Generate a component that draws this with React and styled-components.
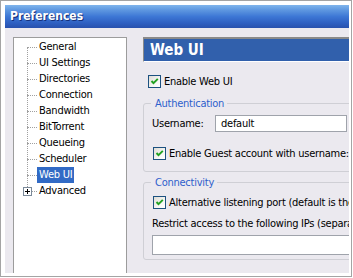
import React from "react"
import styled, { createGlobalStyle } from "styled-components"

const UI_FONT = `"DejaVu Sans Condensed", "Liberation Sans", sans-serif`
const FACE = "#ebe9ef"

const GlobalStyle = createGlobalStyle`
  html, body {
    margin: 0;
    background: #fff;
  }
  body {
    font-family: ${UI_FONT};
    font-size: 11px;
    letter-spacing: -0.25px;
    color: #000;
  }
`

const Frame = styled.div`
  box-sizing: border-box;
  width: 352px;
  height: 277px;
  border: 1px solid #a4a4a4;
  padding: 4px 2px 3px 4px;
  background: #fff;
  overflow: hidden;
`
const Window = styled.div`
  display: flex;
  flex-direction: column;
  height: 100%;
  overflow: hidden;
`
const TitleBar = styled.div`
  flex-shrink: 0;
  height: 23px;
  display: flex;
  align-items: center;
  padding: 0 0 1px 5px;
  box-sizing: border-box;
  background: linear-gradient(
    180deg,
    #80b5ec 0%,
    #5e97e0 22%,
    #3d77d5 50%,
    #2e60c2 78%,
    #2851ad 100%
  );
  color: #fff;
  font-weight: bold;
  font-size: 12px;
  letter-spacing: 0;
  text-shadow: 1px 1px 0 #14307a;
`
const Body = styled.div`
  flex: 1;
  min-height: 0;
  display: flex;
  gap: 16px;
  padding: 9px 0 0 8px;
  background: ${FACE};
  overflow: hidden;
`

/* tree */
const Tree = styled.div`
  flex-shrink: 0;
  width: 114px;
  box-sizing: border-box;
  border: 1px solid #9c9c9c;
  border-bottom: none;
  background: #fff;
  padding-top: 1px;
`
const TreeList = styled.div`
  position: relative;
  &::before {
    content: "";
    position: absolute;
    left: 13px;
    top: 8px;
    bottom: 8px;
    border-left: 1px dotted #a0a0a0;
  }
`
const TreeRow = styled.div`
  display: flex;
  align-items: center;
  height: 16px;
`
const Branch = styled.span`
  position: relative;
  flex-shrink: 0;
  width: 23px;
  height: 16px;
  &::after {
    content: "";
    position: absolute;
    left: 13px;
    top: 8px;
    width: 10px;
    border-top: 1px dotted #a0a0a0;
  }
`
const Expander = styled.svg`
  position: absolute;
  left: 9px;
  top: 4px;
  z-index: 1;
`
const TreeLabel = styled.span`
  line-height: 16px;
  padding: 0 2px;
  white-space: nowrap;
  background: ${({ $selected }) => ($selected ? "#316ac5" : "transparent")};
  color: ${({ $selected }) => ($selected ? "#fff" : "#000")};
`

/* right side */
const Panel = styled.div`
  flex-shrink: 0;
  width: 260px;
  display: flex;
  flex-direction: column;
`
const PanelHeader = styled.div`
  height: 22px;
  display: flex;
  align-items: center;
  padding-left: 6px;
  border-top: 2px solid #8a8a8a;
  border-left: 1px solid #8a8a8a;
  border-bottom: 1px solid #fff;
  background: #3160ac;
  color: #fff;
  font-weight: bold;
  font-size: 15px;
  letter-spacing: 0;
`
const CheckRow = styled.label`
  display: flex;
  align-items: center;
  gap: 3px;
  height: 13px;
  line-height: 13px;
  white-space: nowrap;
  margin-top: ${({ $top }) => $top}px;
  margin-left: ${({ $left }) => $left}px;
`
const Box = styled.span`
  flex-shrink: 0;
  box-sizing: border-box;
  width: 13px;
  height: 13px;
  border: 1px solid #1c5180;
  background: linear-gradient(135deg, #dedcd5 0%, #f6f6f4 60%, #fff 100%);
  display: flex;
  align-items: center;
  justify-content: center;
`
const Group = styled.div`
  position: relative;
  border: 1px solid #cfcfd5;
  border-radius: 3px;
  margin-top: ${({ $top }) => $top}px;
  padding: ${({ $pad }) => $pad};
`
const Legend = styled.span`
  position: absolute;
  top: -7px;
  left: 7px;
  padding: 0 3px 0 4px;
  line-height: 13px;
  background: ${FACE};
  color: #2e5fcc;
`
const FieldRow = styled.div`
  display: flex;
  align-items: center;
`
const FieldLabel = styled.span`
  width: 63px;
  flex-shrink: 0;
`
const TextBox = styled.div`
  box-sizing: border-box;
  flex-shrink: 0;
  width: ${({ $w }) => $w}px;
  height: ${({ $h }) => $h}px;
  border: 1px solid #9fa3ab;
  background: #fff;
  padding-left: 5px;
  display: flex;
  align-items: center;
  margin-top: ${({ $top = 0 }) => $top}px;
`
const Note = styled.div`
  line-height: 13px;
  white-space: nowrap;
  margin-top: ${({ $top }) => $top}px;
`

const Check = () => (
  <Box>
    <svg width="9" height="9" viewBox="0 0 9 9">
      <path d="M1.5 4 L3.5 6.2 L7.8 1.8" fill="none" stroke="#21a121" strokeWidth="1.9" />
    </svg>
  </Box>
)

const Plus = () => (
  <Expander width="9" height="9" viewBox="0 0 9 9">
    <rect x="0.5" y="0.5" width="8" height="8" fill="#fff" stroke="#7a8999" />
    <path d="M2 4.5 H7 M4.5 2 V7" stroke="#000" strokeWidth="1" />
  </Expander>
)

const pages = [
  "General",
  "UI Settings",
  "Directories",
  "Connection",
  "Bandwidth",
  "BitTorrent",
  "Queueing",
  "Scheduler",
  "Web UI",
  "Advanced",
]

export default function App() {
  return (
    <>
      <GlobalStyle />
      <Frame>
        <Window>
          <TitleBar>Preferences</TitleBar>
          <Body>
            <Tree>
              <TreeList>
                {pages.map((name) => (
                  <TreeRow key={name}>
                    <Branch>{name === "Advanced" && <Plus />}</Branch>
                    <TreeLabel $selected={name === "Web UI"}>{name}</TreeLabel>
                  </TreeRow>
                ))}
              </TreeList>
            </Tree>

            <Panel>
              <PanelHeader>Web UI</PanelHeader>
              <CheckRow $top={13} $left={5}>
                <Check />
                Enable Web UI
              </CheckRow>

              <Group $top={15} $pad="11px 0 11px 8px">
                <Legend>Authentication</Legend>
                <FieldRow>
                  <FieldLabel>Username:</FieldLabel>
                  <TextBox $w={132} $h={17}>default</TextBox>
                </FieldRow>
                <CheckRow $top={15} $left={1}>
                  <Check />
                  Enable Guest account with username:
                </CheckRow>
              </Group>

              <Group $top={10} $pad="13px 0 4px 8px">
                <Legend>Connectivity</Legend>
                <CheckRow $top={0} $left={1}>
                  <Check />
                  Alternative listening port (default is the same as BitTorrent)
                </CheckRow>
                <Note $top={8}>Restrict access to the following IPs (separated by commas):</Note>
                <TextBox $w={240} $h={20} $top={5} />
              </Group>
            </Panel>
          </Body>
        </Window>
      </Frame>
    </>
  )
}
